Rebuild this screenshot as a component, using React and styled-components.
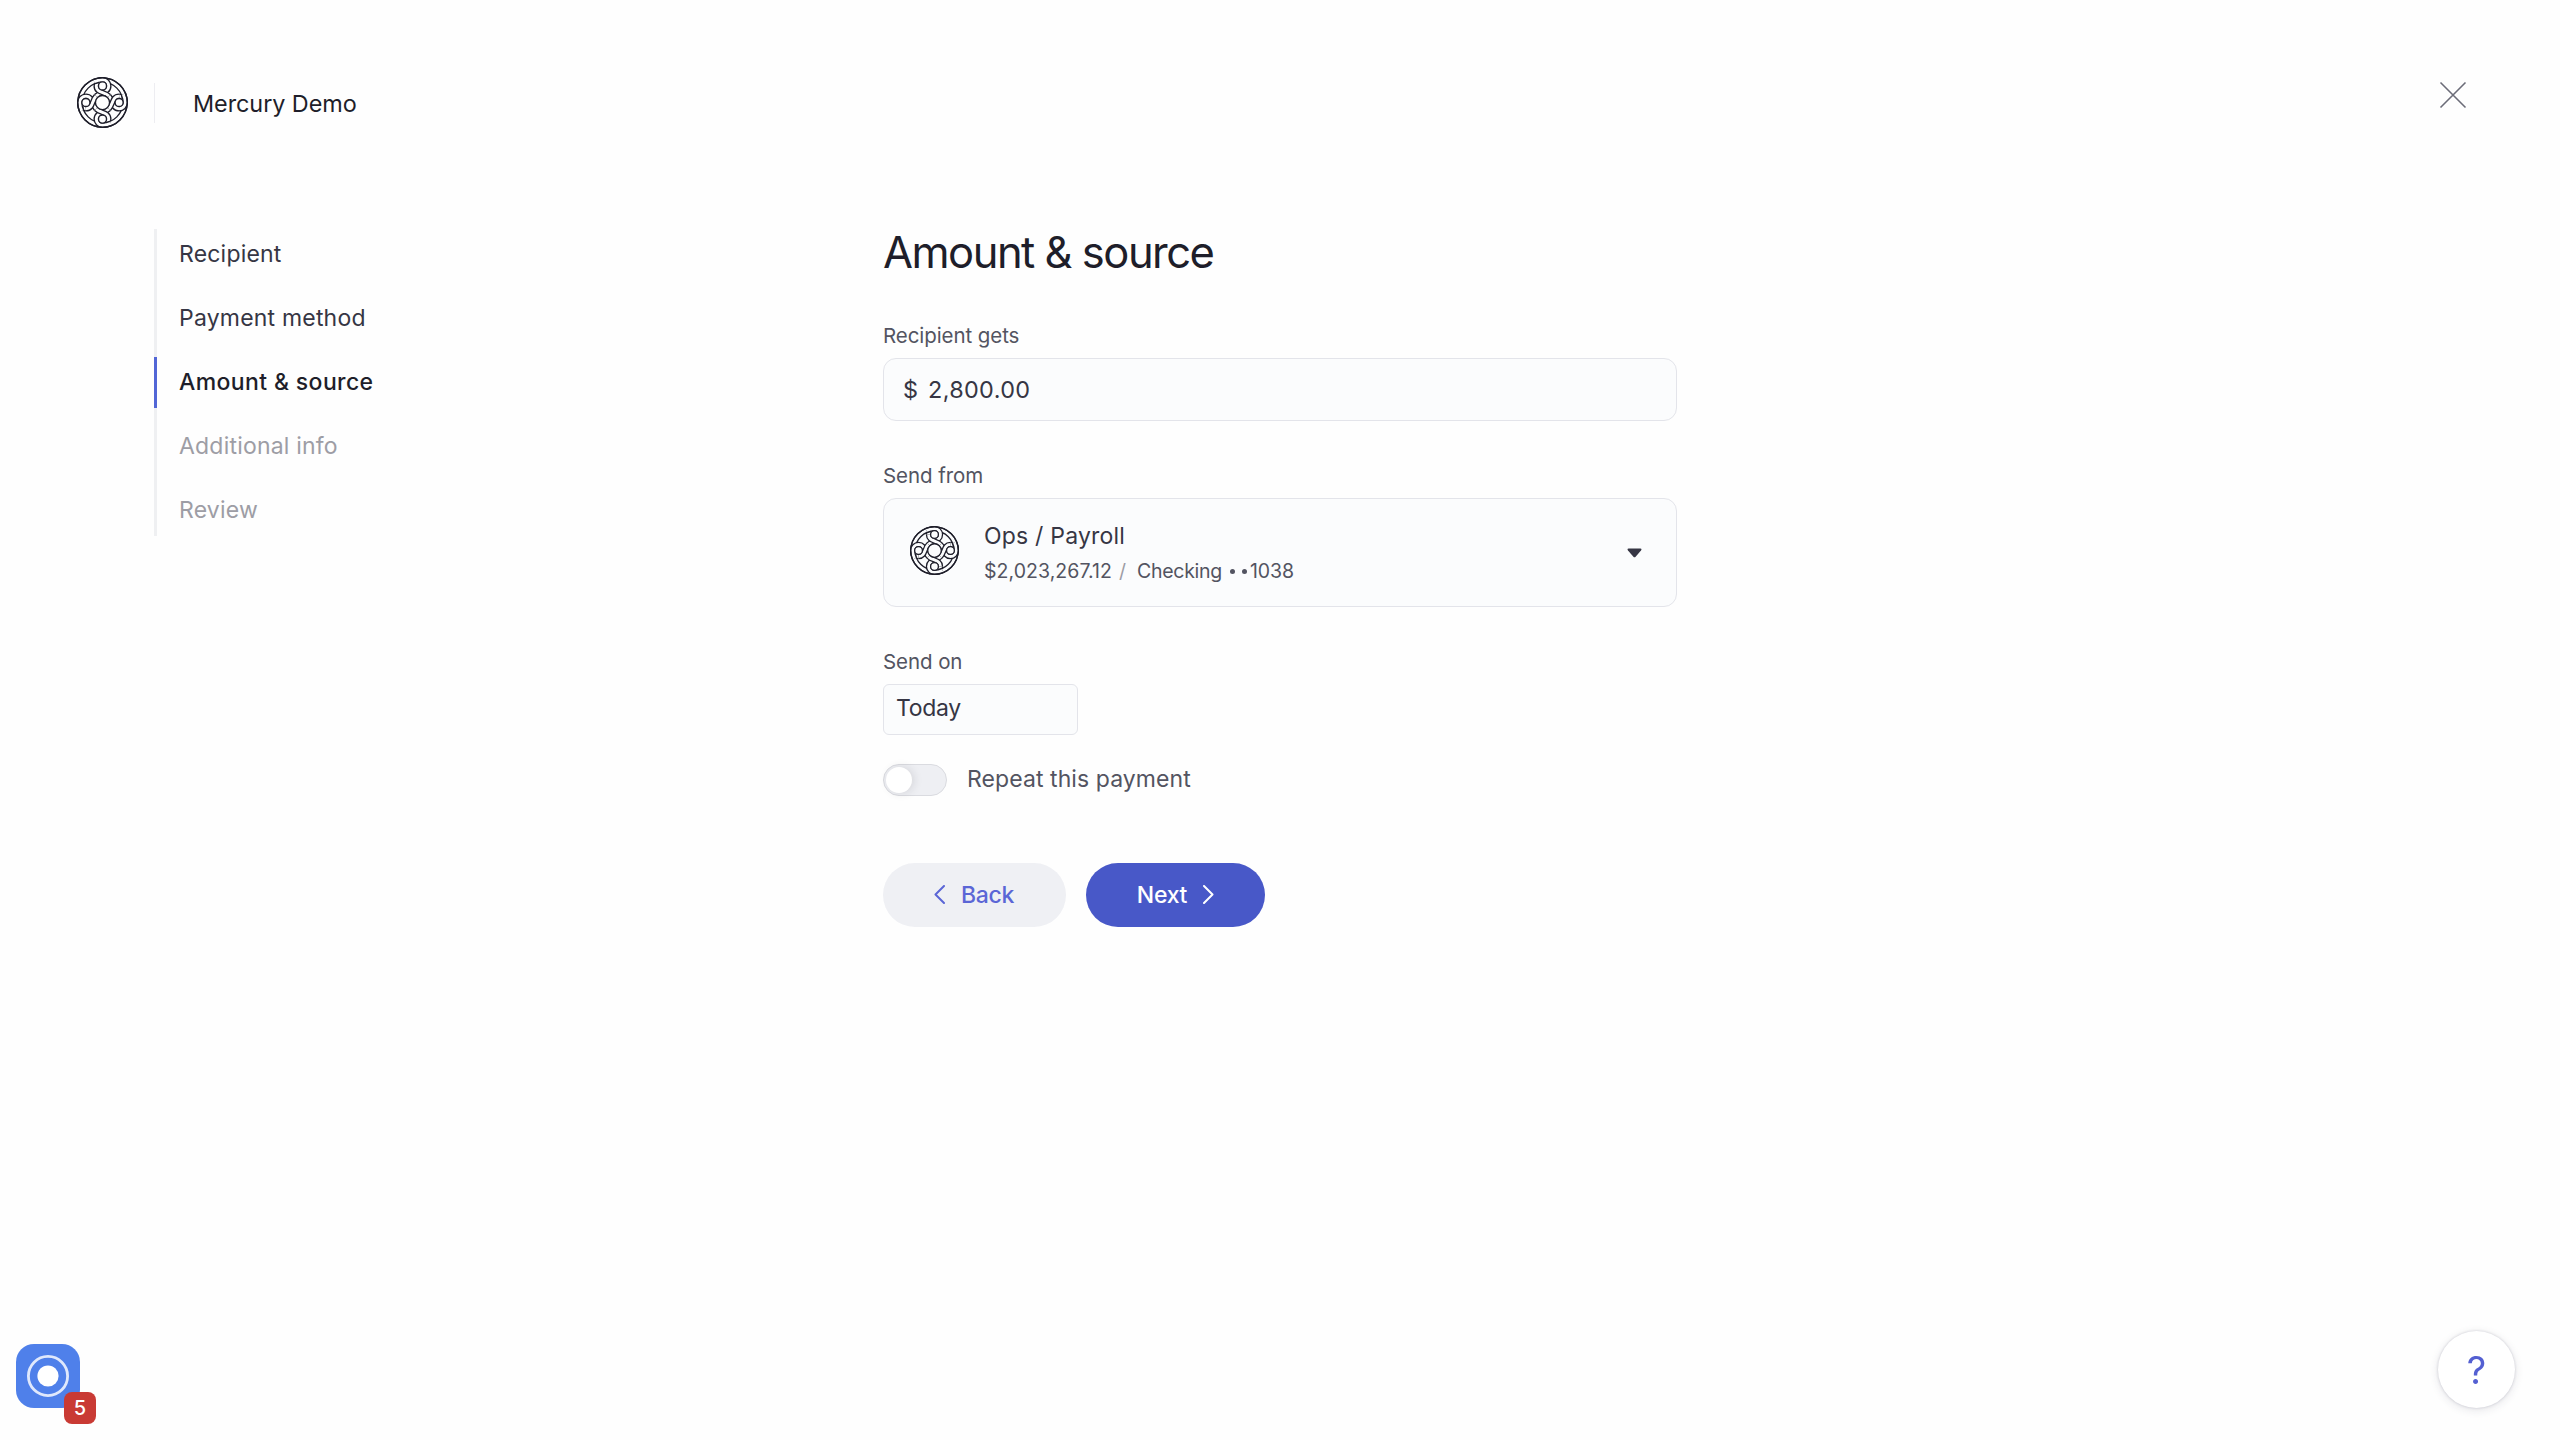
import { useState } from "react";
import styled, { createGlobalStyle } from "styled-components";

const GlobalStyle = createGlobalStyle`
  * {
    box-sizing: border-box;
  }
  body {
    margin: 0;
    background-color: #fefefe;
    color: #363644;
    font-family: Inter, "Liberation Sans", sans-serif;
    font-size: 23px;
  }
  button, input {
    font-family: inherit;
    font-size: inherit;
    color: inherit;
  }
`;

const Page = styled.div`
  display: flex;
  flex-direction: column;
  min-height: 100vh;
`;

const Header = styled.header`
  display: flex;
  justify-content: space-between;
  align-items: flex-start;
  height: 229px;
  padding: 77px 93px 0 77px;
`;

const Brand = styled.div`
  display: flex;
  align-items: center;
  height: 51px;
`;

const Divider = styled.div`
  width: 1px;
  height: 40px;
  margin: 0 38px 0 26px;
  background-color: #ededf1;
`;

const OrgName = styled.span`
  color: #1e1e2a;
  font-size: 23.4px;
  letter-spacing: -0.05px;
  line-height: 32px;
  padding-top: 2px;
`;

const CloseButton = styled.button`
  display: flex;
  margin-top: 4px;
  padding: 0;
  border: none;
  background: none;
`;

const Main = styled.main`
  display: grid;
  grid-template-columns: 1fr 794px 1fr;
  align-items: start;
`;

const Steps = styled.ul`
  display: flex;
  flex-direction: column;
  gap: 13px;
  width: 300px;
  margin: 0 0 0 154px;
  padding: 0;
  list-style: none;
  background: linear-gradient(#eff0f2, #eff0f2) left / 3px 100% no-repeat;
`;

const stepColors = {
  done: "#363644",
  active: "#1e1e2a",
  todo: "#9d9da5",
};

const Step = styled.li`
  height: 51px;
  padding-left: 22px;
  border-left: 3px solid ${(props) => (props.$status === "active" ? "#5266d6" : "transparent")};
  color: ${(props) => stepColors[props.$status]};
  font-weight: ${(props) => (props.$status === "active" ? 500 : 400)};
  letter-spacing: ${(props) => (props.$status === "active" ? 0.38 : 0.2)}px;
  line-height: 51px;
`;

const Form = styled.form`
  display: flex;
  flex-direction: column;
  align-items: flex-start;
`;

const Title = styled.h1`
  margin: 0 0 47px;
  color: #1e1e2a;
  font-size: 43.5px;
  font-weight: 400;
  letter-spacing: -1.5px;
  line-height: 47px;
`;

const Field = styled.div`
  display: flex;
  flex-direction: column;
  width: 100%;
  margin-bottom: ${(props) => props.$gap || 42}px;
`;

const Label = styled.label`
  height: 25px;
  margin-bottom: 10px;
  color: #535461;
  font-size: 20.5px;
  letter-spacing: -0.08px;
  line-height: 25px;
`;

const AmountBox = styled.div`
  display: flex;
  align-items: center;
  gap: 10px;
  height: 63px;
  padding: 0 19px;
  border: 1px solid #e3e4ea;
  border-radius: 13px;
  background-color: #fbfcfd;
  font-size: 23.4px;
`;

const AmountInput = styled.input`
  flex: 1;
  padding: 0;
  border: none;
  outline: none;
  background: none;
  letter-spacing: 0.35px;
`;

const AccountSelect = styled.div`
  display: flex;
  align-items: center;
  height: 109px;
  padding: 0 34px 0 26px;
  border: 1px solid #e3e4ea;
  border-radius: 13px;
  background-color: #fbfcfd;
`;

const AccountLogo = styled.div`
  display: flex;
  padding-bottom: 4px;
`;

const AccountInfo = styled.div`
  flex: 1;
  display: flex;
  flex-direction: column;
  gap: 5px;
  margin-left: 25px;
`;

const AccountName = styled.span`
  letter-spacing: 0.2px;
  line-height: 32px;
`;

const AccountMeta = styled.span`
  display: flex;
  align-items: center;
  color: #535461;
  font-size: 19.5px;
  letter-spacing: 0.05px;
  line-height: 29px;
`;

const Slash = styled.span`
  margin: 0 11px 0 7px;
  color: #9d9da5;
`;

const AccountType = styled.span`
  letter-spacing: -0.28px;
`;

const Dots = styled.span`
  display: flex;
  gap: 7px;
  margin: 0 3px 0 8px;

  i {
    width: 5px;
    height: 5px;
    border-radius: 50%;
    background-color: #535461;
  }
`;

const AccountNumber = styled.span`
  letter-spacing: -0.1px;
`;

const DateInput = styled.input`
  width: 195px;
  height: 51px;
  padding: 0 12px 3px;
  border: 1px solid #e3e4ea;
  border-radius: 6px;
  outline: none;
  background-color: #fbfcfd;
  letter-spacing: -0.3px;
`;

const ToggleRow = styled.div`
  display: flex;
  align-items: center;
  gap: 20px;
  height: 32px;
  margin-bottom: 67px;
`;

const Toggle = styled.button`
  display: flex;
  justify-content: ${(props) => (props.$on ? "flex-end" : "flex-start")};
  align-items: center;
  width: 64px;
  height: 32px;
  padding: 0 2px;
  border: 1px solid #dadbe0;
  border-radius: 16px;
  background-color: #eeeff3;
`;

const Knob = styled.span`
  width: 26px;
  height: 26px;
  border-radius: 50%;
  background-color: #fff;
  box-shadow: 2px 0 10px rgba(30, 30, 42, 0.12);
`;

const ToggleLabel = styled.span`
  padding-bottom: 1px;
  color: #535461;
  letter-spacing: 0.08px;
  line-height: 29px;
`;

const Actions = styled.div`
  display: flex;
  gap: 20px;
`;

const Button = styled.button`
  display: flex;
  justify-content: center;
  align-items: center;
  gap: 16px;
  width: ${(props) => (props.$primary ? 179 : 183)}px;
  height: 64px;
  padding: ${(props) => (props.$primary ? "0 0 1px" : "0 1px 1px 0")};
  border: none;
  border-radius: 32px;
  background-color: ${(props) => (props.$primary ? "#4858c8" : "#eff0f4")};
  color: ${(props) => (props.$primary ? "#fff" : "#5b66d6")};
  font-weight: 500;
  letter-spacing: -0.3px;
`;

const Recorder = styled.div`
  position: fixed;
  left: 16px;
  bottom: 32px;
  display: flex;
  justify-content: center;
  align-items: center;
  width: 64px;
  height: 64px;
  border-radius: 18px;
  background-color: #4f80ea;
`;

const Badge = styled.span`
  position: absolute;
  right: -16px;
  bottom: -16px;
  width: 32px;
  height: 32px;
  border-radius: 8px;
  background-color: #c93a34;
  color: #fff;
  font-size: 20px;
  font-weight: 500;
  line-height: 33px;
  text-align: center;
`;

const HelpButton = styled.button`
  position: fixed;
  right: 45px;
  bottom: 32px;
  display: flex;
  justify-content: center;
  align-items: center;
  width: 77px;
  height: 77px;
  padding: 0;
  border: none;
  border-radius: 50%;
  background-color: #fff;
  box-shadow: 0 0 3px rgba(40, 40, 70, 0.2), 0 2px 10px rgba(40, 40, 70, 0.12);
  color: #5460d2;
  font-size: 38px;
  font-weight: 400;
`;

const ANGLES = [0, 90, 180, 270];

// one arm of the knot, repeated every quarter turn
function Strand({ d, bg }) {
  return ANGLES.map((angle) => (
    <g key={angle} transform={`rotate(${angle})`} fill="none">
      <path d={d} stroke="#1e1e2a" strokeWidth="17" />
      <path d={d} stroke={bg} strokeWidth="9" />
    </g>
  ));
}

function Logo({ size, bg = "#fefefe" }) {
  return (
    <svg width={size} height={size} viewBox="-76 -76 152 152">
      <Strand bg={bg} d="M-49.5 18.5 A18.5 18.5 0 0 1 -68 0" />
      <Strand bg={bg} d="M-67 0 A67 67 0 0 1 0 -67" />
      <Strand bg={bg} d="M-25 -62.2 A67 67 0 0 1 0 -68 A18.5 18.5 0 0 1 18.5 -49.5 C18.5 -28 -5 -33 -19 -19" />
      <Strand bg={bg} d="M-19 -19 C-33 -5 -28 18.5 -49.5 18.5" />
      <g stroke="#1e1e2a" strokeWidth="4" fill="none">
        <circle r="73.5" />
        <circle r="21" fill={bg} />
        {ANGLES.map((angle) => (
          <circle key={angle} cy="-49.5" r="12" transform={`rotate(${angle})`} fill={bg} />
        ))}
      </g>
    </svg>
  );
}

function Chevron({ d }) {
  return (
    <svg width="11" height="19" viewBox="0 0 11 19" fill="none" stroke="currentColor" strokeWidth="2" strokeLinecap="round" strokeLinejoin="round">
      <path d={d} />
    </svg>
  );
}

const STEPS = [
  { name: "Recipient", status: "done" },
  { name: "Payment method", status: "done" },
  { name: "Amount & source", status: "active" },
  { name: "Additional info", status: "todo" },
  { name: "Review", status: "todo" },
];

export default function App() {
  const [amount, setAmount] = useState("2,800.00");
  const [date, setDate] = useState("Today");
  const [repeat, setRepeat] = useState(false);

  return (
    <Page>
      <GlobalStyle />
      <Header>
        <Brand>
          <Logo size={51} />
          <Divider />
          <OrgName>Mercury Demo</OrgName>
        </Brand>
        <CloseButton aria-label="Close">
          <svg width="28" height="28" viewBox="0 0 28 28" stroke="#6b6c78" strokeWidth="1.6">
            <path d="M1.5 1.5 L26.5 26.5 M26.5 1.5 L1.5 26.5" />
          </svg>
        </CloseButton>
      </Header>
      <Main>
        <Steps>
          {STEPS.map((step) => (
            <Step key={step.name} $status={step.status}>{step.name}</Step>
          ))}
        </Steps>
        <Form onSubmit={(e) => e.preventDefault()}>
          <Title>Amount & source</Title>
          <Field>
            <Label>Recipient gets</Label>
            <AmountBox>
              <span>$</span>
              <AmountInput value={amount} onChange={(e) => setAmount(e.target.value)} />
            </AmountBox>
          </Field>
          <Field>
            <Label>Send from</Label>
            <AccountSelect>
              <AccountLogo>
                <Logo size={49} bg="#fbfcfd" />
              </AccountLogo>
              <AccountInfo>
                <AccountName>Ops / Payroll</AccountName>
                <AccountMeta>
                  $2,023,267.12
                  <Slash>/</Slash>
                  <AccountType>Checking</AccountType>
                  <Dots><i /><i /></Dots>
                  <AccountNumber>1038</AccountNumber>
                </AccountMeta>
              </AccountInfo>
              <svg width="15" height="10" viewBox="0 0 15 10" fill="#363644">
                <path d="M1.6 0.5 H13.4 Q15.2 0.8 14 2.4 L8.6 8.8 Q7.5 9.8 6.4 8.8 L1 2.4 Q-0.2 0.8 1.6 0.5 Z" />
              </svg>
            </AccountSelect>
          </Field>
          <Field $gap={29}>
            <Label>Send on</Label>
            <DateInput value={date} onChange={(e) => setDate(e.target.value)} />
          </Field>
          <ToggleRow>
            <Toggle type="button" $on={repeat} onClick={() => setRepeat(!repeat)}>
              <Knob />
            </Toggle>
            <ToggleLabel>Repeat this payment</ToggleLabel>
          </ToggleRow>
          <Actions>
            <Button type="button">
              <Chevron d="M10 1 L1.5 9.5 L10 18" />
              Back
            </Button>
            <Button $primary>
              Next
              <Chevron d="M1 1 L9.5 9.5 L1 18" />
            </Button>
          </Actions>
        </Form>
      </Main>
      <Recorder>
        <svg width="44" height="44" viewBox="0 0 44 44">
          <circle cx="22" cy="22" r="19.6" fill="none" stroke="#dfe8fc" strokeWidth="2.8" />
          <circle cx="22" cy="22" r="10.6" fill="#fff" />
        </svg>
        <Badge>5</Badge>
      </Recorder>
      <HelpButton>?</HelpButton>
    </Page>
  );
}
